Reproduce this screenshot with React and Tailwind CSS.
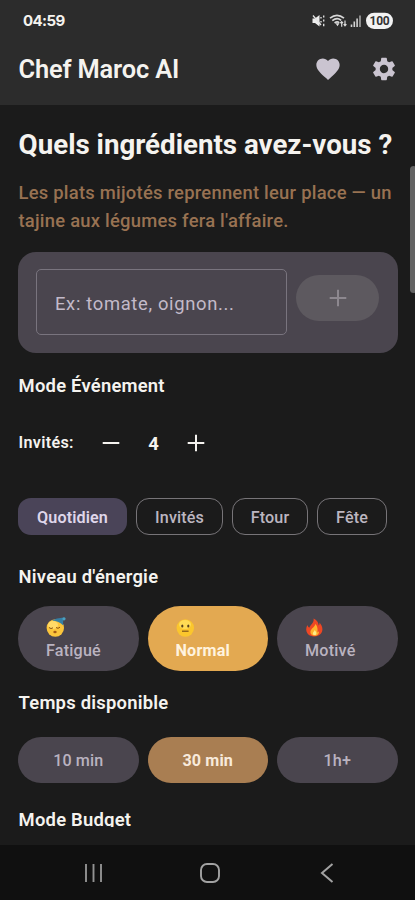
import React from "react";

function StatusIcons() {
  return (
    <svg width="84" height="18" viewBox="311 12 84 18" fill="none">
      <path d="M312.500 18.500h2.500l4.500-3.500v11.500l-4.500-3.500h-2.500z" fill="#ededed" />
      <path d="M313 15.500l8 9.500" stroke="#e4e4e4" strokeWidth="1.300" />
      <path d="M321 17v1.500M323.700 15.500v2M323.700 19.500v2M321 21v1.500M323.700 23.700v2.500" stroke="#dcdcdc" strokeWidth="1.400" />
      <path d="M330 18.200q7-5.600 14 0M332.300 20.700q4.700-3.800 8.800-.4M334.600 23q2.600-2 4.600-.2" stroke="#d8d8d8" strokeWidth="1.700" />
      <path d="M335.500 23.200h4l-2 3z" fill="#ddd" />
      <path d="M341.700 26.800v-5M340.300 23.200l1.400-1.600 1.300 1.600M345 20.500v5M343.700 24.200l1.300 1.600 1.400-1.600" stroke="#ddd" strokeWidth="1.200" />
      <path d="M351.500 24.500v2.500M354.300 21.500v5.500M357.100 18.500v8.500" stroke="#d2d2d2" strokeWidth="1.600" />
      <path d="M360 15.500v11.500" stroke="#a5a5a5" strokeWidth="1.600" />
      <rect x="366" y="12.700" width="27" height="16.300" rx="8.150" fill="#f3f3f3" />
      <text x="379.500" y="25" textAnchor="middle" fontSize="12" fontWeight="700" letterSpacing="-0.3" fontFamily="Roboto, sans-serif" fill="#333">100</text>
    </svg>
  );
}

function Sleepy() {
  return (
    <svg width="20" height="20" viewBox="0 0 20 20" className="block">
      <circle cx="9.300" cy="11" r="8.700" fill="#fbc53c" />
      <ellipse cx="7" cy="8" rx="5" ry="4" fill="#ffda68" />
      <path d="M3 10.500q2 2 4 .3M10 10.500q2 1.800 4-.3" stroke="#8a5312" strokeWidth="1" fill="none" />
      <ellipse cx="9" cy="15" rx="1.700" ry="1.300" fill="#a45b15" />
      <path d="M6 3.500Q12 0 18.500.8q-2 2-1.200 7.700Q13 4 6 3.500z" fill="#347fa5" />
      <circle cx="18" cy="1.800" r="1.600" fill="#4b9fc0" />
    </svg>
  );
}

function Neutral() {
  return (
    <svg width="20" height="20" viewBox="0 0 20 20" className="block">
      <circle cx="9.300" cy="11" r="8.700" fill="#fbc62d" />
      <ellipse cx="9" cy="7.500" rx="6" ry="4.500" fill="#ffdc55" />
      <ellipse cx="6.300" cy="9" rx="1.100" ry="1.600" fill="#58411b" />
      <ellipse cx="12.300" cy="9" rx="1.100" ry="1.600" fill="#58411b" />
      <path d="M6 14.200h6.600" stroke="#80531a" strokeWidth="1.200" />
    </svg>
  );
}

function Flame() {
  return (
    <svg width="20" height="20" viewBox="0 0 20 20" className="block">
      <path d="M8.500 1.500c4 2 5 4.500 5.200 7 .8-.8 1-1.800.8-3 3 3.500 4 7.500 1.500 11-3 3.800-10.500 3.800-13.300.3C.5 13.600 1 10.500 2.500 8c.3 1.500 1 2.300 1.800 2.800C5.500 7.500 9.500 6 8.500 1.500z" fill="#ee4724" />
      <path d="M10.200 7c.5 2.500-4.800 4.500-4.800 8 0 2.500 2 3.800 4.200 3.800 2.800 0 4.800-1.800 4.300-4.800-.3.800-.8 1.200-1.500 1.500C12.800 12.500 12.700 9 10.200 7z" fill="#ffb22d" />
      <path d="M9.500 13c.3 1.300-2 2-1.600 3.900.4 1.700 3.400 1.500 3.500-.4.100-1.300-.8-2.400-1.900-3.500z" fill="#ffed8a" />
    </svg>
  );
}

function Plus({ color, width = 2 }) {
  return (
    <svg width="18" height="18" viewBox="0 0 18 18" className="block" fill="none">
      <path d="M9 .7v16.600M.7 9h16.600" stroke={color} strokeWidth={width} />
    </svg>
  );
}

function Label({ children }) {
  return <h2 className="h-7 whitespace-nowrap pl-[0.6px] text-[18.400px] font-semibold leading-[30px] tracking-[0.23px]">{children}</h2>;
}

function Energy({ icon, label, active }) {
  return (
    <button className={"flex h-[65px] flex-col items-start rounded-full pl-7 pt-[11px] text-[16.140px] leading-[21px] tracking-[0.2px] " + (active ? "bg-[#e3a951] font-bold text-[#fff3df]" : "bg-[#4a454e] font-medium text-[#bab3c0]")}>
      {icon}
      <span className="mt-[3px]">{label}</span>
    </button>
  );
}

function Chip({ children, className }) {
  return (
    <button className={"h-[37px] rounded-[13px] pt-[3px] text-[16.140px] tracking-[0.12px] " + className}>{children}</button>
  );
}

export default function App() {
  return (
    <div className="flex h-[900px] w-[415px] flex-col overflow-hidden bg-[#1b1b1b] font-['Roboto',sans-serif] text-[#f5f3ef]">
      <header className="h-[105px] shrink-0 bg-[#2c2c2c]">
        <div className="flex h-[42px] items-center justify-between pl-[23px] pr-5">
          <span className="font-['Inter',sans-serif] text-[15px] font-bold leading-5 tracking-[-0.6px]">04:59</span>
          <StatusIcons />
        </div>
        <div className="flex h-[54px] items-center justify-between pl-[18.500px] pr-[17px]">
          <h1 className="text-[25.400px] font-semibold leading-8 tracking-[-0.15px]">Chef Maroc AI</h1>
          <div className="flex items-center gap-7">
            <svg width="28" height="28" viewBox="0 0 24 24" fill="#cac4d0"><path d="M12 21.350l-1.450-1.320C5.400 15.360 2 12.280 2 8.500 2 5.420 4.420 3 7.500 3c1.740 0 3.410.810 4.500 2.090C13.090 3.810 14.760 3 16.500 3 19.580 3 22 5.420 22 8.500c0 3.780-3.400 6.860-8.550 11.540z" /></svg>
            <svg width="28" height="28" viewBox="0 0 24 24" fill="#cac4d0"><path d="M19.140 12.940c.04-.3.060-.61.060-.94s-.02-.64-.07-.94l2.030-1.580a.49.490 0 0 0 .12-.61l-1.920-3.320a.488.488 0 0 0-.59-.22l-2.390.960c-.5-.38-1.030-.7-1.620-.94l-.36-2.540a.484.484 0 0 0-.48-.41h-3.840c-.24 0-.43.170-.47.410l-.36 2.540c-.59.240-1.130.570-1.620.940l-2.390-.96c-.22-.08-.47 0-.59.220L2.740 8.870c-.12.210-.08.470.12.610l2.030 1.580c-.05.300-.09.630-.09.940s.02.640.07.940l-2.030 1.580a.49.490 0 0 0-.12.610l1.920 3.320c.12.220.37.290.59.220l2.390-.96c.5.380 1.030.7 1.620.94l.36 2.540c.05.240.24.410.48.410h3.840c.24 0 .44-.17.470-.41l.36-2.540c.59-.24 1.130-.56 1.620-.94l2.390.960c.22.080.47 0 .59-.22l1.920-3.320a.49.490 0 0 0-.12-.61zM12 15.600A3.610 3.610 0 0 1 8.400 12c0-1.980 1.620-3.600 3.600-3.600s3.600 1.620 3.600 3.600-1.620 3.600-3.600 3.600z" /></svg>
          </div>
        </div>
      </header>

      <main className="relative h-[722px] shrink-0 overflow-hidden px-[18px] pt-[24px]">
        <div className="absolute right-[-2px] top-[61px] h-[127px] w-[7px] rounded-[4px] bg-[#636363]" />
        <h2 className="whitespace-nowrap pl-[0.6px] text-[27.700px] font-bold leading-8">Quels ingrédients avez-vous ?</h2>
        <p className="mt-[18px] whitespace-nowrap pl-[0.5px] text-[18.400px] font-medium leading-[28px] tracking-[0.24px] text-[#987252]">
          Les plats mijotés reprennent leur place — un<br />tajine aux légumes fera l'affaire.
        </p>
        <section className="mt-[17px] flex h-[101px] w-[379.500px] items-start gap-[9px] rounded-[18px] bg-[#4a454e] pl-[18px] pt-[17px]">
          <div className="flex h-[66px] w-[251px] items-center rounded-[5px] border border-[#79747e] pl-[18px] pt-[3px] text-[18.400px] tracking-[0.66px] text-[#c3bac9]">Ex: tomate, oignon...</div>
          <button className="mt-[6px] flex h-[46px] w-[83px] items-center justify-center rounded-full bg-[#5d595f]"><Plus color="#8d888f" /></button>
        </section>
        <div className="mt-[18px]"><Label>Mode Événement</Label></div>
        <div className="mt-[30px] flex h-[28px] items-center">
          <span className="w-[84px] pl-[0.6px] pt-px text-[16.140px] font-semibold tracking-[0.3px]">Invités:</span>
          <svg width="18" height="18" viewBox="0 0 18 18"><path d="M.7 9h16.600" stroke="#f5f3ef" strokeWidth="2" /></svg>
          <span className="w-[67px] pt-px text-center text-[18.400px] font-bold">4</span>
          <Plus color="#f5f3ef" />
        </div>
        <div className="mt-[41px] flex gap-[9px]">
          <Chip className="w-[109px] bg-[#4a4458] font-semibold text-[#dfd6ea]">Quotidien</Chip>
          <Chip className="w-[87px] border border-[#777478] font-medium text-[#bcb6c0]">Invités</Chip>
          <Chip className="w-[76px] border border-[#777478] font-medium text-[#bcb6c0]">Ftour</Chip>
          <Chip className="w-[70px] border border-[#777478] font-medium text-[#bcb6c0]">Fête</Chip>
        </div>
        <div className="mt-[27px]"><Label>Niveau d'énergie</Label></div>
        <div className="mt-[16px] grid w-[379.500px] grid-cols-3 gap-[9px]">
          <Energy icon={<Sleepy />} label="Fatigué" />
          <Energy icon={<Neutral />} label="Normal" active />
          <Energy icon={<Flame />} label="Motivé" />
        </div>
        <div className="mt-[17px]"><Label>Temps disponible</Label></div>
        <div className="mt-[21px] grid w-[379.500px] grid-cols-3 gap-[9px] text-[16.140px] tracking-[0.12px]">
          <button className="h-[46px] rounded-full bg-[#4a454e] pt-[3px] font-medium text-[#bab3c0]">10 min</button>
          <button className="h-[46px] rounded-full bg-[#a97e52] pt-[3px] font-bold text-[#f8eadb]">30 min</button>
          <button className="h-[46px] rounded-full bg-[#4a454e] pt-[3px] font-medium text-[#bab3c0]">1h+</button>
        </div>
        <div className="mt-[22px]"><Label>Mode Budget</Label></div>
      </main>

      <nav className="mt-auto flex h-[55px] shrink-0 items-center bg-[#101010] pl-[84px]">
        <svg width="20" height="20" viewBox="0 0 20 20"><path d="M2 1v18M9.500 1v18M17 1v18" stroke="#929292" strokeWidth="1.900" /></svg>
        <svg className="ml-[96px]" width="20" height="20" viewBox="0 0 20 20" fill="none"><rect x="1" y="1" width="18" height="18" rx="6" stroke="#a2a2a2" strokeWidth="1.900" /></svg>
        <svg className="ml-[100px]" width="14" height="20" viewBox="0 0 14 20" fill="none"><path d="M12.500 1L2 10l10.500 9" stroke="#a2a2a2" strokeWidth="2" /></svg>
      </nav>
    </div>
  );
}
